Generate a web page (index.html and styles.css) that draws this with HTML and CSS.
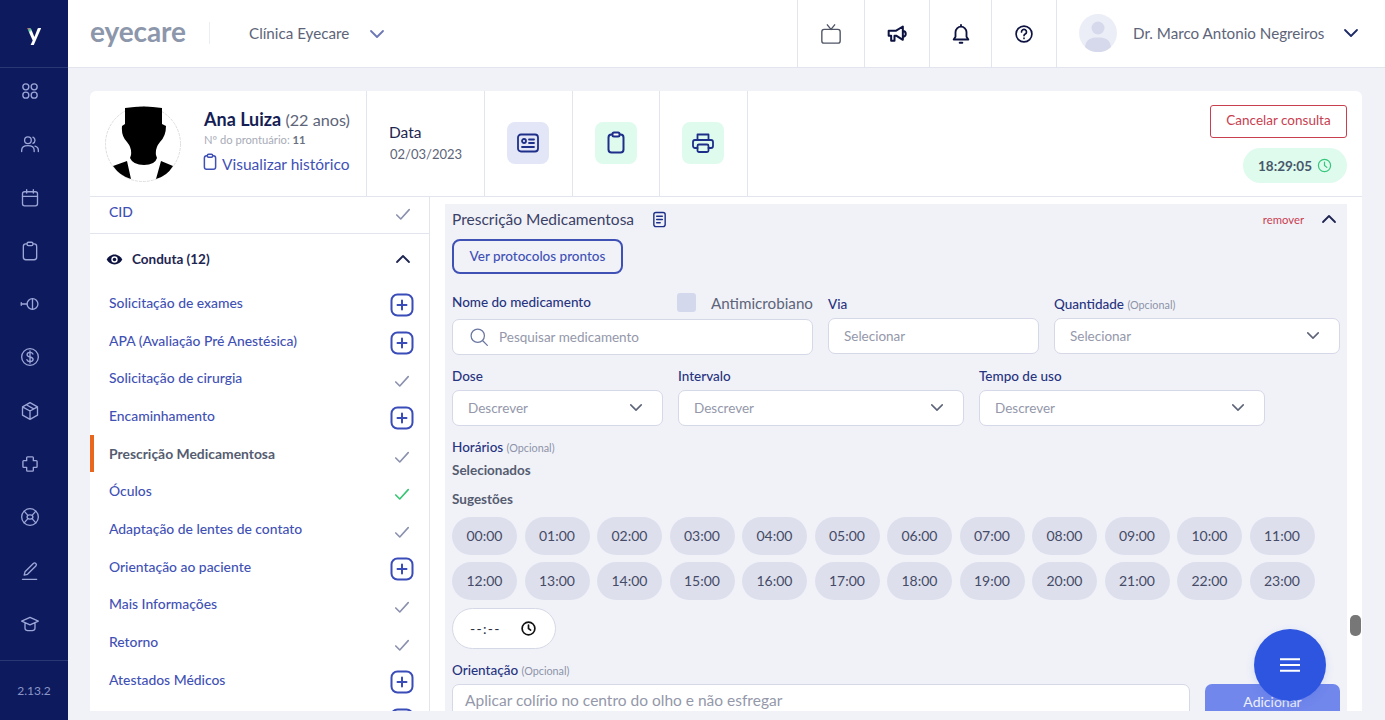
FILE: index.html
```html
<!DOCTYPE html>
<html lang="pt-BR">
<head>
<meta charset="utf-8">
<title>Eyecare</title>
<link rel="stylesheet" href="styles.css">
</head>
<body>
<svg class="defs" aria-hidden="true">
  <symbol id="check" viewBox="0 0 18 16"><path d="M2 8.500l4.500 4.500L16 2.500" fill="none" stroke="currentColor" stroke-width="1.800" stroke-linecap="round" stroke-linejoin="round"/></symbol>
  <symbol id="plus" viewBox="0 0 24 24"><rect x="1.500" y="1.500" width="21" height="21" rx="6" fill="none" stroke="currentColor" stroke-width="2"/><path d="M12 7.500v9M7.500 12h9" fill="none" stroke="currentColor" stroke-width="2" stroke-linecap="round"/></symbol>
  <symbol id="chev" viewBox="0 0 16 10"><path d="M2 2l6 6 6-6" fill="none" stroke="currentColor" stroke-width="1.800" stroke-linecap="round" stroke-linejoin="round"/></symbol>
  <symbol id="clip" viewBox="0 0 24 24"><rect x="4.500" y="3.500" width="15" height="18" rx="3" fill="none" stroke="currentColor" stroke-width="2"/><rect x="8.500" y="1.500" width="7" height="4" rx="1.500" fill="#fff" stroke="currentColor" stroke-width="2"/></symbol>
</svg>

<aside class="sidebar">
  <div class="brand"><span class="brand-y">y</span></div>
  <nav class="side-nav">
    <svg class="side-icon" viewBox="0 0 24 24"><circle cx="7" cy="7" r="3.600"/><circle cx="17" cy="7" r="3.600"/><circle cx="7" cy="17" r="3.600"/><circle cx="17" cy="17" r="3.600"/></svg>
    <svg class="side-icon" viewBox="0 0 24 24"><circle cx="9.500" cy="7.500" r="4"/><path d="M2 21v-1.500c0-3.500 3-5.500 7.500-5.500s7.500 2 7.500 5.500V21M15.500 3.800a4 4 0 0 1 0 7.400M18 14.500c2.500.6 4 2.500 4 5V21"/></svg>
    <svg class="side-icon" viewBox="0 0 24 24"><rect x="3" y="4.500" width="18" height="17" rx="2.500"/><path d="M3 10h18M8 2v4M16 2v4"/></svg>
    <svg class="side-icon" viewBox="0 0 24 24"><rect x="4" y="3.500" width="16" height="19" rx="3"/><rect x="8.500" y="1.500" width="7" height="4" rx="1.500" class="side-fill"/></svg>
    <svg class="side-icon" viewBox="0 0 24 24"><circle cx="15" cy="12" r="6.500"/><path d="M15 5.500v13M1.500 12h7M1.500 10.500v3"/></svg>
    <svg class="side-icon" viewBox="0 0 24 24"><circle cx="12" cy="12" r="10"/><path d="M15.500 8.500c-.5-1.200-1.800-2-3.500-2-2 0-3.500 1-3.500 2.700 0 3.800 7.200 1.800 7.200 5.600 0 1.700-1.600 2.700-3.700 2.700-1.800 0-3.200-.8-3.700-2.200M12 4.800v14.400"/></svg>
    <svg class="side-icon" viewBox="0 0 24 24"><path d="M12 2l9 5v10l-9 5-9-5V7zM3 7l9 5 9-5M12 12v10M7.500 4.500l9 5"/></svg>
    <svg class="side-icon" viewBox="0 0 24 24"><path d="M9 3.500h6a1 1 0 0 1 1 1V8h3.500a1 1 0 0 1 1 1v6a1 1 0 0 1-1 1H16v3.500a1 1 0 0 1-1 1H9a1 1 0 0 1-1-1V16H4.500a1 1 0 0 1-1-1V9a1 1 0 0 1 1-1H8V4.500a1 1 0 0 1 1-1z"/></svg>
    <svg class="side-icon" viewBox="0 0 24 24"><circle cx="12" cy="12" r="10"/><ellipse cx="12" cy="12" rx="3.500" ry="2.500"/><path d="M5 5l4.500 5M19 5l-4.500 5M5 19l4.500-5M19 19l-4.500-5"/></svg>
    <svg class="side-icon" viewBox="0 0 24 24"><path d="M5 17l1-4L16 3a2 2 0 0 1 3 3L9 16zM3 22h17"/></svg>
    <svg class="side-icon" viewBox="0 0 24 24"><path d="M12 4L2 8.500l10 4.500 10-4.500zM6 11v6c0 1.500 2.500 3 6 3s6-1.500 6-3v-6"/></svg>
  </nav>
  <div class="version">2.13.2</div>
</aside>

<div class="main">
  <header class="topbar">
    <div class="logo">eyecare</div>
    <div class="clinic">
      <span>Clínica Eyecare</span>
      <svg class="clinic-chev"><use href="#chev"/></svg>
    </div>
    <div class="top-tools">
      <div class="tool tool-1"><svg class="tool-icon tv" viewBox="0 0 24 24"><rect x="2" y="7" width="20" height="15" rx="2.500"/><path d="M8 2l4 5 4-5"/></svg></div>
      <div class="tool tool-2"><svg class="tool-icon megaphone" viewBox="0 0 24 24"><path d="M2 8h9l8-5v16l-8-5H9v6H5v-6H2zM19 8.500a3.500 3.500 0 0 1 0 7"/></svg></div>
      <div class="tool tool-3"><svg class="tool-icon" viewBox="0 0 24 24"><path d="M4 18h16l-2-3V10a6 6 0 0 0-12 0v5zM12 2v2M10.500 21.500h3"/></svg></div>
      <div class="tool tool-4"><svg class="tool-icon question" viewBox="0 0 24 24"><circle cx="12" cy="12" r="9.500"/><path d="M9 9.500a3 3 0 1 1 4.500 2.600c-1 .6-1.500 1-1.500 2M12 17v.5"/></svg></div>
    </div>
    <div class="user">
      <svg class="user-avatar" viewBox="0 0 38 38"><circle cx="19" cy="19" r="19" fill="#eceef7"/><circle cx="19" cy="14" r="6.500" fill="#d6d9ec"/><path d="M6 33c1-8 6-9.500 13-9.500S31 25 32 33a19 19 0 0 1-26 0z" fill="#d6d9ec"/></svg>
      <span class="user-name">Dr. Marco Antonio Negreiros</span>
      <svg class="user-chev"><use href="#chev"/></svg>
    </div>
  </header>

  <main class="content">
    <section class="card">
      <div class="patient-bar">
        <div class="patient">
          <svg class="photo" viewBox="0 0 76 76">
            <circle cx="38" cy="38" r="37.500" fill="#fff" stroke="#ddd" stroke-dasharray="3 1"/>
            <path d="M20 2Q39-1 57 2L57 18 61 20Q61 30 55 36 50 42 51 49L52 52Q50 59 39 59 28 59 25 52L26 49Q27 42 22 36 16 30 17 20L20 18z" fill="#000"/>
            <path d="M8 60L22 55 26 73Q15 70 8 60zM68 60L56 55 51 73Q62 70 68 60z" fill="#000"/>
          </svg>
          <div class="patient-info">
            <div class="patient-name"><strong>Ana Luiza</strong> <span>(22 anos)</span></div>
            <div class="patient-record">Nº do prontuário: <b>11</b></div>
            <div class="patient-history"><svg class="history-icon"><use href="#clip"/></svg>Visualizar histórico</div>
          </div>
        </div>
        <div class="date-cell">
          <div class="date-label">Data</div>
          <div class="date-value">02/03/2023</div>
        </div>
        <div class="action-cell"><div class="action action-blue"><svg class="action-icon" viewBox="0 0 24 24"><rect x="2" y="3.500" width="20" height="17" rx="3"/><circle cx="8" cy="10" r="2"/><path d="M6 16h12M13 8.500h5M13 12h5"/></svg></div></div>
        <div class="action-cell"><div class="action action-green"><svg class="action-icon"><use href="#clip"/></svg></div></div>
        <div class="action-cell"><div class="action action-green"><svg class="action-icon" viewBox="0 0 24 24"><path d="M6.500 9V3.500h11V9M6.500 17H4a2 2 0 0 1-2-2v-4a2 2 0 0 1 2-2h16a2 2 0 0 1 2 2v4a2 2 0 0 1-2 2h-2.500"/><rect x="6.500" y="13.500" width="11" height="7.500" rx="1.500"/></svg></div></div>
        <div class="status-cell">
          <button class="cancel">Cancelar consulta</button>
          <div class="timer">18:29:05 <svg class="timer-icon" viewBox="0 0 16 16"><circle cx="8" cy="8" r="6.500"/><path d="M8 4.500V8l2.500 2"/></svg></div>
        </div>
      </div>

      <div class="card-body">
        <div class="left-panel">
          <div class="cid-row"><span class="item-link">CID</span><svg class="check"><use href="#check"/></svg></div>
          <div class="section-head">
            <svg class="eye" viewBox="0 0 24 24"><path d="M12 5C7 5 3 8 1 12c2 4 6 7 11 7s9-3 11-7c-2-4-6-7-11-7z" fill="#0d1340"/><circle cx="12" cy="12" r="4.500" fill="#fff"/><circle cx="12" cy="12" r="2.500" fill="#0d1340"/></svg>
            <span class="section-title">Conduta (12)</span>
            <svg class="up-chev"><use href="#chev"/></svg>
          </div>
          <ul class="items">
            <li class="item"><span class="item-link">Solicitação de exames</span><svg class="plus"><use href="#plus"/></svg></li>
            <li class="item"><span class="item-link">APA (Avaliação Pré Anestésica)</span><svg class="plus"><use href="#plus"/></svg></li>
            <li class="item"><span class="item-link">Solicitação de cirurgia</span><svg class="check"><use href="#check"/></svg></li>
            <li class="item"><span class="item-link">Encaminhamento</span><svg class="plus"><use href="#plus"/></svg></li>
            <li class="item item-active"><span class="item-link">Prescrição Medicamentosa</span><svg class="check"><use href="#check"/></svg></li>
            <li class="item"><span class="item-link">Óculos</span><svg class="check check-green"><use href="#check"/></svg></li>
            <li class="item"><span class="item-link">Adaptação de lentes de contato</span><svg class="check"><use href="#check"/></svg></li>
            <li class="item"><span class="item-link">Orientação ao paciente</span><svg class="plus"><use href="#plus"/></svg></li>
            <li class="item"><span class="item-link">Mais Informações</span><svg class="check"><use href="#check"/></svg></li>
            <li class="item"><span class="item-link">Retorno</span><svg class="check"><use href="#check"/></svg></li>
            <li class="item"><span class="item-link">Atestados Médicos</span><svg class="plus"><use href="#plus"/></svg></li>
            <li class="item"><span class="item-link"></span><svg class="plus"><use href="#plus"/></svg></li>
          </ul>
        </div>

        <div class="right-panel">
          <div class="rx">
            <div class="rx-head">
              <span class="rx-title">Prescrição Medicamentosa</span>
              <svg class="rx-doc" viewBox="0 0 24 24"><rect x="4" y="2" width="16" height="20" rx="3"/><path d="M8 7.500h8M8 12h8M8 16.500h5"/></svg>
              <span class="rx-remove">remover</span>
              <svg class="rx-chev"><use href="#chev"/></svg>
            </div>
            <button class="protocols">Ver protocolos prontos</button>

            <div class="row row-1">
              <div class="field">
                <div class="label-line">
                  <label class="label">Nome do medicamento</label>
                  <span class="antimicrobial"><span class="box"></span><span class="anti-text">Antimicrobiano</span></span>
                </div>
                <div class="input input-search">
                  <svg class="search" viewBox="0 0 24 24"><circle cx="10.500" cy="10.500" r="8"/><path d="M16.500 16.500L22 22"/></svg>
                  <span class="ph">Pesquisar medicamento</span>
                </div>
              </div>
              <div class="field field-low">
                <label class="label">Via</label>
                <div class="input"><span class="ph">Selecionar</span></div>
              </div>
              <div class="field field-low">
                <label class="label">Quantidade <small class="opt">(Opcional)</small></label>
                <div class="input"><span class="ph">Selecionar</span><svg class="select-chev"><use href="#chev"/></svg></div>
              </div>
            </div>

            <div class="row row-2">
              <div class="field">
                <label class="label">Dose</label>
                <div class="input"><span class="ph">Descrever</span><svg class="select-chev"><use href="#chev"/></svg></div>
              </div>
              <div class="field">
                <label class="label">Intervalo</label>
                <div class="input"><span class="ph">Descrever</span><svg class="select-chev"><use href="#chev"/></svg></div>
              </div>
              <div class="field">
                <label class="label">Tempo de uso</label>
                <div class="input"><span class="ph">Descrever</span><svg class="select-chev"><use href="#chev"/></svg></div>
              </div>
            </div>

            <div class="label schedule-label">Horários <small class="opt">(Opcional)</small></div>
            <div class="sub-label selected-label">Selecionados</div>
            <div class="sub-label suggest-label">Sugestões</div>
            <div class="chips">
              <span class="chip">00:00</span><span class="chip">01:00</span><span class="chip">02:00</span><span class="chip">03:00</span><span class="chip">04:00</span><span class="chip">05:00</span><span class="chip">06:00</span><span class="chip">07:00</span><span class="chip">08:00</span><span class="chip">09:00</span><span class="chip">10:00</span><span class="chip">11:00</span>
              <span class="chip">12:00</span><span class="chip">13:00</span><span class="chip">14:00</span><span class="chip">15:00</span><span class="chip">16:00</span><span class="chip">17:00</span><span class="chip">18:00</span><span class="chip">19:00</span><span class="chip">20:00</span><span class="chip">21:00</span><span class="chip">22:00</span><span class="chip">23:00</span>
            </div>
            <div class="time-input"><span>--:--</span><svg class="time-icon" viewBox="0 0 16 16"><circle cx="8" cy="8" r="6"/><path d="M8 4.800V8l2 1.500"/></svg></div>
            <div class="label orient-label">Orientação <small class="opt">(Opcional)</small></div>
            <div class="orient-row">
              <div class="orient-input">Aplicar colírio no centro do olho e não esfregar</div>
              <button class="add">Adicionar</button>
            </div>
          </div>
        </div>
      </div>
    </section>
  </main>
</div>

<div class="scroll-thumb"></div>
<button class="fab" aria-label="Menu"><svg class="fab-icon" viewBox="0 0 20 14"><path d="M0 1.200h20M0 7h20M0 12.800h20"/></svg></button>
</body>
</html>
```

FILE: styles.css
```css
* { box-sizing: border-box; }
html, body { margin: 0; height: 720px; overflow: hidden; }
body { display: flex; font-family: "Lato", "Noto Sans", sans-serif; background: #f1f2f8; color: #2a2f55; position: relative; }
button { font-family: inherit; cursor: pointer; }
ul { list-style: none; margin: 0; padding: 0; }
.defs { position: absolute; width: 0; height: 0; }

.sidebar { width: 68px; flex: none; height: 720px; background: #0d1b5e; display: flex; flex-direction: column; }
.brand { height: 68px; display: flex; align-items: center; justify-content: center; border-bottom: 1px solid #2a3775; flex: none; }
.brand-y { font-size: 27px; font-weight: 700; line-height: 1; margin-top: -5px; background: linear-gradient(135deg, #f5a623 0, #e84a5f 25%, #4cc9a0 36%, #fff 44%); -webkit-background-clip: text; background-clip: text; color: transparent; }
.side-nav { flex: 1; display: flex; flex-direction: column; align-items: center; gap: 33.300px; padding: 13px 8px 0 0; }
.side-icon { width: 20px; height: 20px; fill: none; stroke: #9da6d8; stroke-width: 1.600; stroke-linecap: round; stroke-linejoin: round; flex: none; }
.side-fill { fill: #0d1b5e; }
.version { height: 60px; border-top: 1px solid #2a3775; color: #8c96c8; font-size: 12px; display: flex; align-items: center; justify-content: center; flex: none; }

.main { flex: 1; min-width: 0; display: flex; flex-direction: column; height: 720px; }
.topbar { height: 68px; flex: none; background: #fff; border-bottom: 1px solid #e2e4ee; display: flex; align-items: center; padding-left: 22px; }
.logo { width: 120px; color: #8d97ab; font-size: 28px; font-weight: 700; letter-spacing: -.1px; margin-top: -5px; flex: none; }
.clinic { flex: 1; height: 22px; border-left: 1px solid #eceef4; padding-left: 39px; margin-left: -1px; margin-top: -2px; display: flex; align-items: center; gap: 20px; font-size: 15.200px; color: #5d6478; }
.clinic-chev { width: 16px; height: 10px; color: #6b78b5; margin-top: 2px; }
.top-tools { display: flex; height: 67px; }
.tool { display: flex; align-items: center; justify-content: center; border-left: 1px solid #e2e4ee; }
.tool-1 { width: 67px; } .tool-2 { width: 65px; } .tool-3 { width: 62px; } .tool-4 { width: 65px; }
.tool-icon { width: 22px; height: 22px; fill: none; stroke: #0d1340; stroke-width: 2; stroke-linecap: round; stroke-linejoin: round; }
.tv { stroke: #4f5566; stroke-width: 1.500; }
.megaphone { width: 20px; height: 20px; stroke-width: 2.400; }
.question { width: 20px; height: 20px; }
.user { width: 329px; height: 67px; border-left: 1px solid #e2e4ee; display: flex; align-items: center; padding: 0 0 2px 22px; }
.user-avatar { width: 38px; height: 38px; flex: none; }
.user-name { margin-left: 16px; font-size: 15.200px; color: #5d6478; width: 203px; white-space: nowrap; }
.user-chev { width: 16px; height: 10px; margin-left: 7px; color: #1e2a66; }

.content { flex: 1; min-height: 0; padding: 23px 23px 9px 22px; }
.card { height: 100%; background: #fff; border-radius: 6px 6px 0 0; display: flex; flex-direction: column; overflow: hidden; }

.patient-bar { height: 106px; flex: none; border-bottom: 1px solid #e2e4ee; display: flex; }
.patient { width: 276px; display: flex; align-items: center; padding-left: 15px; }
.photo { width: 76px; height: 76px; flex: none; }
.patient-info { margin-left: 23px; margin-top: -4px; white-space: nowrap; }
.patient-name { font-size: 16.200px; color: #5d6478; line-height: 22px; }
.patient-name strong { font-size: 18px; color: #151d55; font-weight: 700; }
.patient-record { font-size: 11.200px; color: #a8acb8; line-height: 18px; }
.patient-record b { color: #6a7080; }
.patient-history { font-size: 15.500px; color: #3f51b5; display: flex; align-items: center; gap: 3px; margin-top: 4px; margin-left: -3px; line-height: 22px; }
.history-icon { width: 18px; height: 20px; margin-top: -5px; color: #3f51b5; }
.date-cell { width: 118px; border-left: 1px solid #e2e4ee; padding: 31px 0 0 22px; }
.date-label { font-size: 15.500px; color: #1e2550; line-height: 20px; }
.date-value { font-size: 13px; color: #5d6478; line-height: 22px; margin-top: 1px; margin-left: 1px; }
.action-cell { width: 87.500px; border-left: 1px solid #e2e4ee; display: flex; align-items: center; justify-content: center; }
.action-cell + .status-cell { border-left: 1px solid #e2e4ee; }
.action { width: 42px; height: 42px; border-radius: 8px; display: flex; align-items: center; justify-content: center; margin-top: -2px; }
.action-blue { background: #e3e6f6; }
.action-green { background: #dffbee; }
.action-icon { width: 24px; height: 24px; fill: none; stroke: #1e2f8a; color: #1e2f8a; stroke-width: 1.800; stroke-linecap: round; stroke-linejoin: round; }
.status-cell { flex: 1; display: flex; flex-direction: column; align-items: flex-end; padding: 14px 15px 0 0; }
.cancel { width: 137px; height: 33px; border: 1px solid #c8404f; border-radius: 3px; background: #fff; color: #c8404f; font-size: 13.500px; padding: 0 0 3px; }
.timer { width: 104px; height: 35px; margin-top: 10px; background: #dffbee; border-radius: 18px; display: flex; align-items: center; justify-content: center; gap: 5px; font-size: 13.500px; font-weight: 700; color: #47586a; }
.timer-icon { width: 15px; height: 15px; fill: none; stroke: #34c77b; stroke-width: 1.300; stroke-linecap: round; }

.card-body { flex: 1; min-height: 0; display: flex; }
.left-panel { width: 340px; flex: none; border-right: 1px solid #e2e4ee; overflow: hidden; }
.cid-row { height: 37px; border-bottom: 1px solid #e2e4ee; display: flex; align-items: center; justify-content: space-between; padding: 0 18px 6px 19px; }
.section-head { height: 50px; display: flex; align-items: center; padding: 0 18px 0 16px; }
.eye { width: 17px; height: 17px; }
.section-title { margin-left: 9px; font-size: 13.500px; font-weight: 700; color: #1e2550; flex: 1; }
.up-chev { width: 16px; height: 10px; transform: rotate(180deg); color: #1e2550; }
.item { height: 37.700px; display: flex; align-items: center; justify-content: space-between; padding: 0 15px 0 19px; }
.item-link { font-size: 13.900px; color: #3f51b5; font-weight: 500; margin-top: -1px; }
.item-active { border-left: 4px solid #e8671d; padding-left: 15px; }
.item-active .item-link { color: #555c70; font-weight: 700; }
.plus { width: 24px; height: 24px; color: #3a4cb8; margin-top: 5px; }
.check { width: 16px; height: 15px; color: #8a90ae; margin-right: 4px; margin-top: 7px; }
.cid-row .check { margin-right: 0; margin-top: 4px; }
.cid-row .item-link { margin-top: -2px; }
.check-green { color: #35c572; }

.right-panel { flex: 1; min-width: 0; padding: 7px 15px 0 15px; overflow: hidden; }
.rx { height: 100%; background: #f1f2f8; padding: 0 7px; overflow: hidden; position: relative; }
.rx-head { height: 35px; display: flex; align-items: center; font-size: 15.500px; color: #3b4166; padding-bottom: 5px; }
.rx-doc { width: 17px; height: 17px; margin-left: 17px; fill: none; stroke: #1e2f8a; stroke-width: 2; stroke-linecap: round; }
.rx-remove { margin-left: auto; font-size: 11.300px; color: #c8404f; }
.rx-chev { width: 16px; height: 10px; margin-left: 17px; margin-right: 3px; transform: rotate(180deg); color: #1e2550; }
.protocols { width: 171px; height: 35px; border: 2px solid #3f51b5; border-radius: 8px; background: transparent; color: #3f51b5; font-size: 13.500px; font-weight: 500; padding: 0 0 2px; display: block; }

.row { display: grid; column-gap: 15px; }
.row-1 { grid-template-columns: 361px 211px 286px; margin-top: 17px; }
.row-2 { grid-template-columns: 211px 286px 286px; margin-top: 12px; }
.field-low { padding-top: 4px; }
.field-low .label { margin-bottom: 5px; }
.label-line { display: flex; align-items: center; height: 22px; margin-bottom: 6px; }
.label-line .label { width: 225px; margin: 0; flex: none; }
.antimicrobial { display: flex; align-items: center; }
.box { width: 19px; height: 19px; background: #d4d8ec; border-radius: 3px; }
.anti-text { margin-left: 15px; font-size: 15.200px; color: #5d6478; margin-top: 2px; }
.label { display: block; height: 18px; font-size: 13.500px; font-weight: 500; color: #27337f; line-height: 18px; margin-bottom: 5px; }
.opt { font-size: 10.800px; font-weight: 400; color: #8d92a8; }
.input { height: 36px; background: #fff; border: 1px solid #d5d8e6; border-radius: 7px; display: flex; align-items: center; justify-content: space-between; padding: 0 19px 1px 15px; }
.input-search { justify-content: flex-start; padding-left: 16px; }
.ph { font-size: 13.500px; color: #9498aa; }
.search { width: 20px; height: 20px; fill: none; stroke: #6a76a0; stroke-width: 1.500; stroke-linecap: round; margin-right: 10px; }
.select-chev { width: 14px; height: 9px; color: #5d6478; }

.schedule-label { margin: 12px 0 0; }
.sub-label { font-size: 13.500px; font-weight: 700; color: #555c70; line-height: 18px; }
.selected-label { margin-top: 5px; }
.suggest-label { margin-top: 11px; }
.chips { display: flex; flex-wrap: wrap; gap: 7px 7.500px; margin-top: 9px; }
.chip { width: 65px; height: 38px; border-radius: 19px; background: #dddfed; color: #454b66; font-size: 14px; display: flex; align-items: center; justify-content: center; padding-bottom: 2px; }
.time-input { width: 104px; height: 41px; margin-top: 8px; background: #fff; border: 1px solid #d5d8e6; border-radius: 21px; display: flex; align-items: center; padding: 0 18px 1px 17px; justify-content: space-between; font-size: 14px; letter-spacing: 1.300px; color: #2a2f40; }
.time-icon { width: 17px; height: 17px; fill: none; stroke: #111; stroke-width: 1.600; stroke-linecap: round; }
.orient-label { margin: 12px 0 5px; }
.orient-row { display: flex; justify-content: space-between; width: 888px; }
.orient-input { width: 738px; height: 38px; background: #fff; border: 1px solid #d5d8e6; border-radius: 7px; padding: 6px 12px; font-size: 15.500px; color: #9498aa; white-space: nowrap; }
.add { width: 135px; height: 38px; background: #7187ec; border: 0; border-radius: 7px; color: #eef0fb; font-size: 14px; padding: 0 0 4px; }

.scroll-thumb { position: absolute; left: 1350px; top: 615px; width: 11px; height: 21px; border-radius: 5px; background: #777; }
.fab { position: absolute; left: 1254px; top: 629px; width: 72px; height: 72px; border: 0; border-radius: 50%; background: #2d55e0; display: flex; align-items: center; justify-content: center; box-shadow: 0 3px 8px rgba(45, 85, 224, .15); padding: 0; }
.fab-icon { width: 20px; height: 14px; stroke: #fff; stroke-width: 2; fill: none; }
```
